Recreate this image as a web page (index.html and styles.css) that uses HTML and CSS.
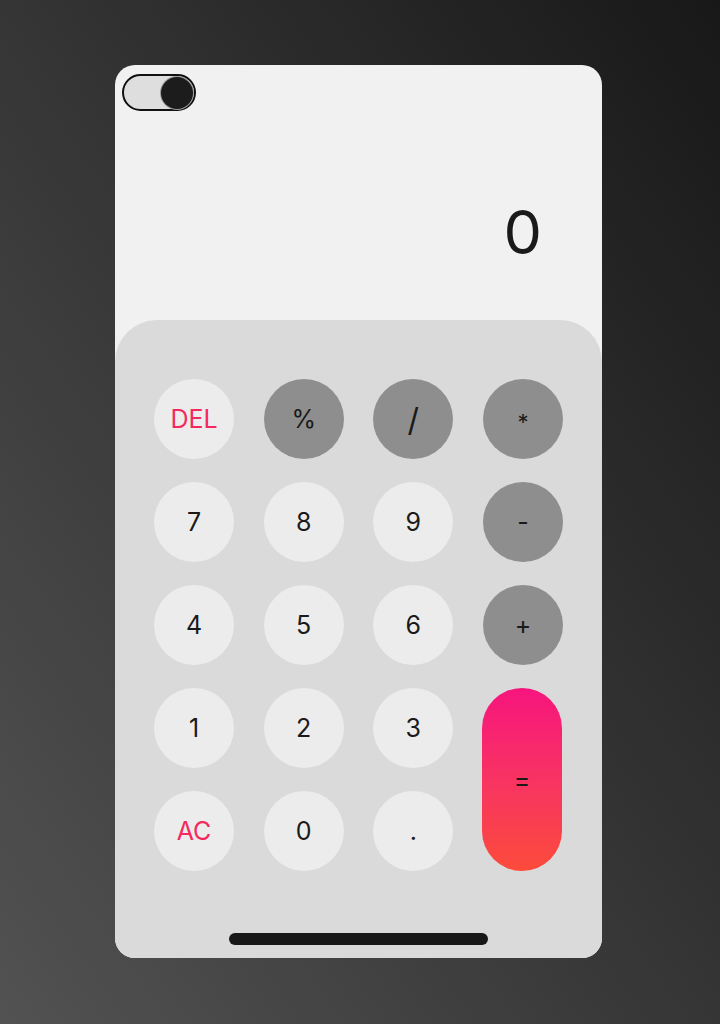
FILE: index.html
```html
<!DOCTYPE html>
<html lang="en">
<head>
<meta charset="utf-8">
<title>Calculator</title>
<link rel="stylesheet" href="styles.css">
</head>
<body>
<div class="page">
  <div class="phone">
    <div class="display">
      <div class="toggle"><span class="knob"></span></div>
      <div class="result">0</div>
    </div>
    <div class="keypad">
      <div class="keys">
        <button class="key light red">DEL</button>
        <button class="key op">%</button>
        <button class="key op big">/</button>
        <button class="key op small">*</button>
        <button class="key light">7</button>
        <button class="key light">8</button>
        <button class="key light">9</button>
        <button class="key op">-</button>
        <button class="key light">4</button>
        <button class="key light">5</button>
        <button class="key light">6</button>
        <button class="key op">+</button>
        <button class="key light">1</button>
        <button class="key light">2</button>
        <button class="key light">3</button>
        <button class="key equals">=</button>
        <button class="key light red">AC</button>
        <button class="key light">0</button>
        <button class="key light">.</button>
      </div>
      <div class="homebar"></div>
    </div>
  </div>
</div>
</body>
</html>
```
FILE: styles.css
```css
html, body {
  margin: 0;
  padding: 0;
}
body {
  width: 720px;
  height: 1024px;
  background: linear-gradient(to top right, #525252 0%, #353535 50%, #181818 100%);
  font-family: Inter, "Noto Sans", sans-serif;
  overflow: hidden;
}
.page {
  padding: 65px 0 0 115px;
}
.phone {
  width: 487px;
  height: 893px;
  background: #f1f1f1;
  border-radius: 20px;
  overflow: hidden;
  display: flex;
  flex-direction: column;
}
.display {
  height: 255px;
  box-sizing: border-box;
  padding: 9px 60px 0 7px;
  display: flex;
  flex-direction: column;
}
.toggle {
  width: 74px;
  height: 37px;
  box-sizing: border-box;
  border: 2px solid #111;
  border-radius: 19px;
  background: #dedede;
  display: flex;
  align-items: center;
  justify-content: flex-end;
  padding-right: 1px;
}
.knob {
  width: 32px;
  height: 32px;
  border-radius: 50%;
  background: #1c1c1c;
  box-shadow: 0 0 0 1px #9a9a9a;
}
.result {
  align-self: flex-end;
  margin-top: 81px;
  font-size: 61px;
  line-height: 80px;
  color: #1a1a1a;
  font-weight: 400;
}
.keypad {
  flex: 1;
  background: #dadada;
  border-radius: 42px 42px 0 0;
  padding: 59px 39px 0;
  display: flex;
  flex-direction: column;
}
.keys {
  display: grid;
  grid-template-columns: repeat(4, 80px);
  grid-template-rows: repeat(5, 80px);
  justify-content: space-between;
  row-gap: 23px;
}
.key {
  border: none;
  margin: 0;
  padding: 0;
  width: 80px;
  height: 80px;
  border-radius: 40px;
  font-family: Inter, "Noto Sans", sans-serif;
  font-size: 25px;
  font-weight: 400;
  color: #1a1a1a;
  display: flex;
  align-items: center;
  justify-content: center;
}
.light {
  background: #ececec;
}
.op {
  background: #8e8e8e;
}
.red {
  color: #f5295c;
}
.big {
  font-size: 32px;
}
.small {
  font-size: 22px;
  padding-top: 6px;
  box-sizing: border-box;
}
.equals {
  grid-column: 4;
  grid-row: 4 / span 2;
  height: auto;
  margin-left: -1px;
  background: linear-gradient(to bottom, #f7157e 0%, #f8365f 55%, #fc4b3b 100%);
}
.homebar {
  margin: 62px auto 0;
  width: 259px;
  height: 12px;
  border-radius: 6px;
  background: #181818;
}
```
